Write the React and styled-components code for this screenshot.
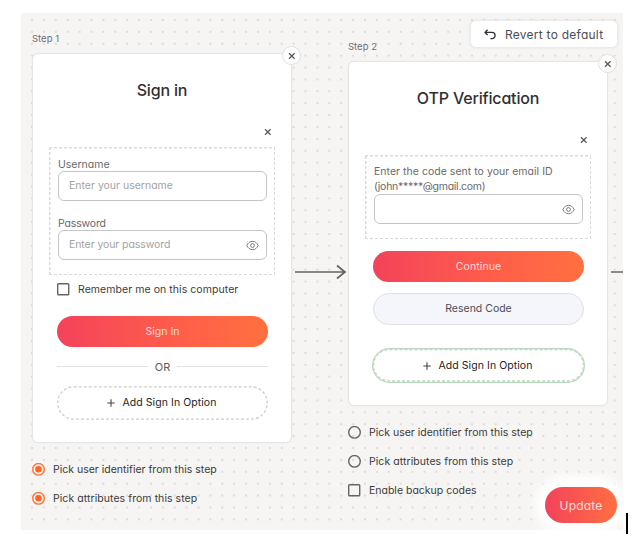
import React from "react";
import styled, { createGlobalStyle, css } from "styled-components";

const GlobalStyle = createGlobalStyle`
  * { box-sizing: border-box; }
  body { margin: 0; background: #fff; font-family: Inter, "Open Sans", sans-serif; font-feature-settings: "cv11"; color: #333; }
`;

const gradient = "linear-gradient(90deg, #f3435b 0%, #ff5f49 60%, #ff7040 100%)";

const Page = styled.div`
  position: relative;
  width: 644px;
  height: 542px;
  padding: 13px 0 0 21px;
  overflow: hidden;
`;

const Canvas = styled.main`
  position: relative;
  display: flex;
  align-items: flex-start;
  width: 602px;
  height: 517px;
  padding-left: 11px;
  overflow: hidden;
  background-color: #f6f5f3;
  background-image: radial-gradient(circle, #dddcda 0.7px, transparent 1.3px);
  background-size: 11.9px 11.9px;
  background-position: 5.1px 1px;
`;

const Step = styled.section`
  width: 260px;
  flex: none;
  padding-top: ${(p) => p.$top}px;
`;

const Text = styled.span`
  display: block;
  white-space: nowrap;
  font-size: ${(p) => p.$size || 10.5}px;
  line-height: ${(p) => p.$line || 14}px;
  color: ${(p) => p.$color || "#3b3b3b"};
  letter-spacing: ${(p) => p.$track || 0}px;
`;

const Card = styled.div`
  position: relative;
  height: ${(p) => p.$height}px;
  margin-top: 7px;
  padding: 0 24px;
  background: #fff;
  border: 1px solid #e5e5e4;
  border-radius: 6px;
  box-shadow: 0 0 2px rgba(0, 0, 0, 0.06);
`;

const CardTitle = styled.h2`
  margin: 0;
  padding-top: 25px;
  height: 74px;
  text-align: center;
  white-space: nowrap;
  font-size: 16px;
  line-height: 23px;
  font-weight: 500;
  letter-spacing: -0.17px;
  color: #303030;
`;

const CloseBadge = styled.button`
  position: absolute;
  top: -8px;
  right: -10px;
  display: grid;
  place-items: center;
  width: 19px;
  height: 19px;
  padding: 0;
  border: 1px solid #e0e0e0;
  border-radius: 50%;
  background: #fff;
`;

const RemoveRow = styled.div`
  display: flex;
  justify-content: flex-end;
  height: 19px;
  margin-right: -4.5px;
`;

const FieldGroup = styled.div`
  height: ${(p) => p.$height}px;
  margin: 0 -8px;
  padding: ${(p) => p.$top || 12}px 8px 0 9px;
  border-radius: 1px;
  --dash: #dadada;
  background:
    repeating-linear-gradient(90deg, var(--dash) 0 3px, transparent 3px 5px) top / 100% 1.5px no-repeat,
    repeating-linear-gradient(90deg, var(--dash) 0 3px, transparent 3px 5px) bottom / 100% 1.5px no-repeat,
    repeating-linear-gradient(0deg, var(--dash) 0 3px, transparent 3px 5px) left / 1.5px 100% no-repeat,
    repeating-linear-gradient(0deg, var(--dash) 0 3px, transparent 3px 5px) right / 1.5px 100% no-repeat;
`;

const Input = styled.div`
  display: flex;
  align-items: center;
  justify-content: space-between;
  height: 30px;
  width: 209px;
  margin-bottom: ${(p) => p.$gap || 0}px;
  padding: 0 7px 0 10px;
  border: 1px solid #c4c4c4;
  border-radius: 6px;
  background: #fff;
`;

const CheckRow = styled.label`
  display: flex;
  align-items: center;
  gap: 8px;
  height: 29px;
`;

const Mark = styled.svg`
  display: block;
  flex: none;
  width: 13px;
  height: 13px;
`;

const Pill = styled.button`
  display: flex;
  align-items: center;
  justify-content: center;
  width: 211px;
  padding: 0;
  font-family: inherit;
  font-feature-settings: inherit;
  border-radius: 17px;
  ${(p) =>
    p.$kind === "primary" &&
    css`
      height: 31px;
      margin-top: 12px;
      border: 0;
      background: ${gradient};
    `}
  ${(p) =>
    p.$kind === "secondary" &&
    css`
      height: 32px;
      margin: 11px 0 23px;
      border: 1px solid #dfe0eb;
      background: #f5f6fb;
    `}
`;

const AddButton = styled.button`
  position: relative;
  display: flex;
  align-items: center;
  justify-content: center;
  gap: 8px;
  width: ${(p) => (p.$active ? 213 : 211)}px;
  height: ${(p) => (p.$active ? 35 : 34)}px;
  margin-left: ${(p) => (p.$active ? -1 : 0)}px;
  padding: 0 2px 0 0;
  border: 0;
  border-radius: 17px;
  background: #fff;
  font-family: inherit;
  font-feature-settings: inherit;
`;

const Outline = styled.svg`
  position: absolute;
  inset: 0;
  width: 100%;
  height: 100%;
`;

const Divider = styled.div`
  display: flex;
  align-items: center;
  gap: 7px;
  height: 39px;
  width: 211px;
  &::before, &::after {
    content: "";
    flex: 1;
    height: 1px;
    background: #e4e4e4;
  }
`;

const Options = styled.div`
  padding-top: 12px;
`;

const Connector = styled.div`
  flex: none;
  width: ${(p) => p.$width}px;
  padding: 251px 0 0 3px;
  line-height: 0;
`;

const Revert = styled.button`
  position: absolute;
  top: 7px;
  right: 5px;
  display: flex;
  align-items: center;
  gap: 9px;
  width: 148px;
  height: 28px;
  padding: 1px 0 0 13px;
  border: 1px solid #ebebeb;
  border-radius: 6px;
  background: #fff;
  box-shadow: 0 0 3px rgba(0, 0, 0, 0.08);
  font-family: inherit;
  font-feature-settings: inherit;
`;

const Update = styled.button`
  position: absolute;
  right: 6px;
  bottom: 7px;
  display: grid;
  place-items: center;
  width: 72px;
  height: 36px;
  padding: 1px 0 0;
  border: 0;
  border-radius: 18px;
  background: linear-gradient(90deg, #f3435b, #ff6f41);
  box-shadow: 0 0 8px 8px #fff, 0 0 14px 10px rgba(255, 255, 255, 0.7);
  font-family: inherit;
  font-feature-settings: inherit;
`;

const Caret = styled.i`
  position: absolute;
  left: 626px;
  top: 513px;
  width: 2px;
  height: 21px;
  background: #000;
`;

const Cross = () => (
  <svg width="8" height="8" viewBox="0 0 8 8" fill="none" stroke="#5a5a5a" strokeWidth="1.3">
    <path d="M1 1.2 6.6 6.8M6.6 1.2 1 6.8" />
  </svg>
);

const Eye = () => (
  <svg width="13" height="11" viewBox="0 0 13 11" fill="none" stroke="#7a7a7a" strokeWidth="1">
    <path d="M.8 5.5C2 2.9 4 1.3 6.5 1.3S11 2.9 12.2 5.5C11 8.1 9 9.7 6.5 9.7S2 8.1.8 5.5Z" />
    <circle cx="6.5" cy="5.5" r="1.9" />
  </svg>
);

const Plus = () => (
  <svg width="8" height="8" viewBox="0 0 8 8" stroke="#444" strokeWidth="1.1">
    <path d="M4 .3v7.4M.3 4h7.4" />
  </svg>
);

const Box = () => (
  <Mark viewBox="0 0 13 13" fill="none">
    <rect x="0.7" y="0.7" width="11" height="11" rx="0.8" stroke="#656565" strokeWidth="1.4" />
  </Mark>
);

const Radio = ({ checked }) => (
  <Mark viewBox="0 0 13 13" fill="none">
    <circle cx="6.5" cy="6.3" r="5.8" stroke={checked ? "#ff7337" : "#656565"} strokeWidth="1.4" />
    {checked && <circle cx="6.5" cy="6.3" r="3.3" fill="#ff6424" />}
  </Mark>
);

const AddOption = ({ active }) => (
  <AddButton $active={active}>
    <Outline fill="none">
      {active && <rect x="0.6" y="0.6" width="211.8" height="33.8" rx="16.9" stroke="#b5dcb8" strokeWidth="1.2" />}
      <rect
        x={active ? 1.5 : 0.8}
        y={active ? 1.5 : 0.8}
        width={active ? 210 : 209.4}
        height={active ? 31.5 : 32.4}
        rx="16"
        stroke="#cdcdcd"
        strokeWidth="1.3"
        strokeDasharray="3 2"
      />
    </Outline>
    <Plus />
    <Text $track={0.06} $color="#252525">Add Sign In Option</Text>
  </AddButton>
);

const Option = ({ label, checked, square, track }) => (
  <CheckRow>
    {square ? <Box /> : <Radio checked={checked} />}
    <Text $track={track}>{label}</Text>
  </CheckRow>
);

export default function App() {
  return (
    <Page>
      <GlobalStyle />
      <Canvas>
        <Step $top={19}>
          <Text $size={9.5} $color="#6e6e7c">Step 1</Text>
          <Card $height={390}>
            <CloseBadge aria-label="Remove step 1"><Cross /></CloseBadge>
            <CardTitle>Sign in</CardTitle>
            <RemoveRow><Cross /></RemoveRow>
            <FieldGroup $height={128}>
              <Text $line={12} $color="#6a6a6a">Username</Text>
              <Input $gap={17}><Text $color="#a3a3a3">Enter your username</Text></Input>
              <Text $line={12} $track={-0.15} $color="#6a6a6a">Password</Text>
              <Input><Text $track={-0.08} $color="#a3a3a3">Enter your password</Text><Eye /></Input>
            </FieldGroup>
            <CheckRow><Box /><Text $line={16} $track={0.06}>Remember me on this computer</Text></CheckRow>
            <Pill $kind="primary"><Text $color="#ffdcd8">Sign In</Text></Pill>
            <Divider><Text $size={11} $color="#5b5b5b">OR</Text></Divider>
            <AddOption />
          </Card>
          <Options>
            <Option checked label="Pick user identifier from this step" />
            <Option checked track={0.06} label="Pick attributes from this step" />
          </Options>
        </Step>
        <Connector $width={56}>
          <svg width="52" height="16" viewBox="0 0 52 16" fill="none" stroke="#646464" strokeWidth="1.7">
            <path d="M0 8H50M42 1.5 50 8 42 14.5" />
          </svg>
        </Connector>
        <Step $top={27}>
          <Text $size={9.5} $color="#6e6e7c">Step 2</Text>
          <Card $height={345}>
            <CloseBadge aria-label="Remove step 2"><Cross /></CloseBadge>
            <CardTitle>OTP Verification</CardTitle>
            <RemoveRow><Cross /></RemoveRow>
            <FieldGroup $height={84} $top={9}>
              <Text $track={0.03} $line={15} $color="#6a6a6a">Enter the code sent to your email ID</Text>
              <Text $track={-0.28} $line={15} $color="#6a6a6a">(john*****@gmail.com)</Text>
              <Input><span /><Eye /></Input>
            </FieldGroup>
            <Pill $kind="primary"><Text $track={0.1} $color="#ffdcd8">Continue</Text></Pill>
            <Pill $kind="secondary"><Text $color="#4d4d55">Resend Code</Text></Pill>
            <AddOption active />
          </Card>
          <Options>
            <Option label="Pick user identifier from this step" />
            <Option track={0.06} label="Pick attributes from this step" />
            <Option square label="Enable backup codes" />
          </Options>
        </Step>
        <Connector $width={15}>
          <svg width="12" height="16" viewBox="0 0 12 16" stroke="#8a8a8a" strokeWidth="2"><path d="M0 8H12" /></svg>
        </Connector>
        <Revert>
          <svg width="12" height="11" viewBox="0 0 12 11" fill="none" stroke="#303038" strokeWidth="1.3">
            <path d="M3.6 .8 1 3.4 3.6 6M1.2 3.4H8a3.1 3.1 0 0 1 0 6.2H6.4" />
          </svg>
          <Text $size={12} $track={0.25} $color="#4c4c56">Revert to default</Text>
        </Revert>
        <Update><Text $size={12} $track={0.2} $color="#ffdcd8">Update</Text></Update>
      </Canvas>
      <Caret />
    </Page>
  );
}
